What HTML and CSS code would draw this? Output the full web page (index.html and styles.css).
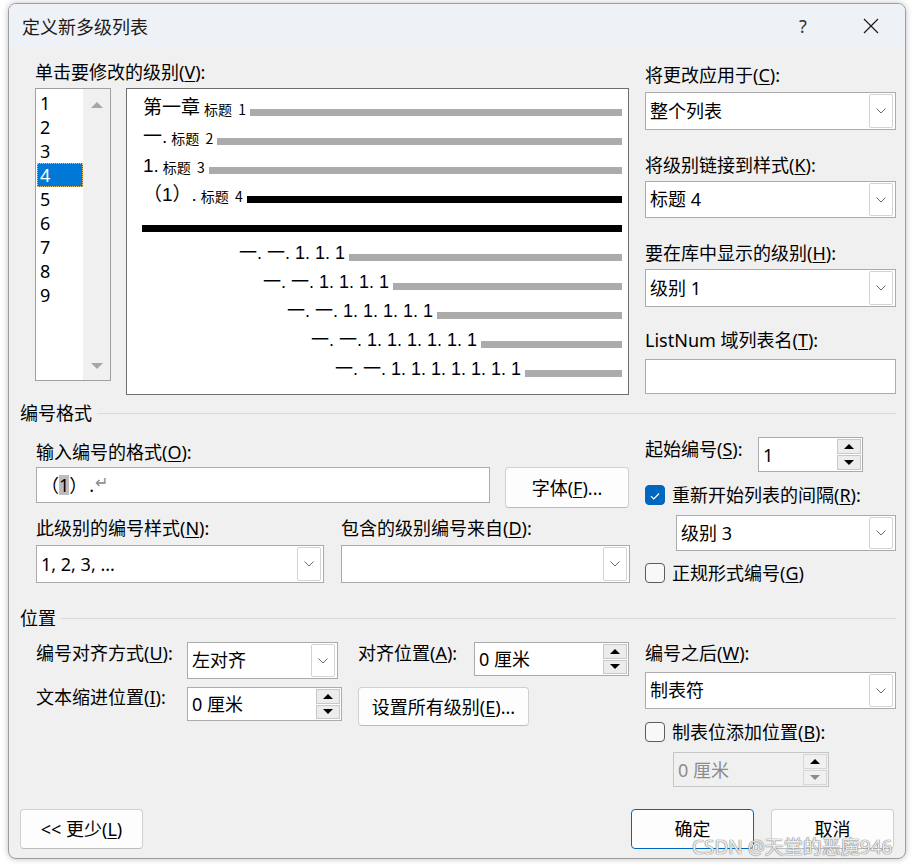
FILE: index.html
```html
<!DOCTYPE html>
<html lang="zh-CN">
<head>
<meta charset="utf-8">
<title>定义新多级列表</title>
<link rel="stylesheet" href="styles.css">
</head>
<body>
<div class="dialog">
  <div class="titlebar">
    <span class="title">定义新多级列表</span>
    <span class="help">?</span>
    <span class="close"><svg width="16" height="16" viewBox="0 0 16 16"><path d="M1 1 L15 15 M15 1 L1 15" stroke="#1a1a1a" stroke-width="1.2" fill="none"/></svg></span>
  </div>
  <div class="content">
    <div class="top">
      <div class="top-left">
        <div class="label">单击要修改的级别(<u>V</u>):</div>
        <div class="top-boxes">
          <div class="levels">
            <ul class="level-items">
              <li>1</li><li>2</li><li>3</li><li class="sel">4</li><li>5</li><li>6</li><li>7</li><li>8</li><li>9</li>
            </ul>
            <div class="vscroll"><span class="tri-up"></span><span class="tri-down"></span></div>
          </div>
          <div class="preview">
            <div class="prow"><span class="pn">第一章</span><span class="pt">标题 1</span><span class="pbar"></span></div>
            <div class="prow"><span class="pn">一.</span><span class="pt">标题 2</span><span class="pbar"></span></div>
            <div class="prow"><span class="pn">1.</span><span class="pt">标题 3</span><span class="pbar"></span></div>
            <div class="prow"><span class="pn">（1）.</span><span class="pt">标题 4</span><span class="pbar dark"></span></div>
            <div class="prow"><span class="pbar dark full"></span></div>
            <div class="prow"><span class="pd d1">一. 一. 1. 1. 1</span><span class="pbar"></span></div>
            <div class="prow"><span class="pd d2">一. 一. 1. 1. 1. 1</span><span class="pbar"></span></div>
            <div class="prow"><span class="pd d3">一. 一. 1. 1. 1. 1. 1</span><span class="pbar"></span></div>
            <div class="prow"><span class="pd d4">一. 一. 1. 1. 1. 1. 1. 1</span><span class="pbar"></span></div>
            <div class="prow"><span class="pd d5">一. 一. 1. 1. 1. 1. 1. 1. 1</span><span class="pbar"></span></div>
          </div>
        </div>
      </div>
      <div class="side top-right">
        <div class="label">将更改应用于(<u>C</u>):</div>
        <div class="combo tr1"><span class="val">整个列表</span><span class="drop"><svg width="10" height="6" viewBox="0 0 10 6"><path d="M0.5 0.5 L5 5 L9.5 0.5" fill="none" stroke="#6b6b6b"/></svg></span></div>
        <div class="label tl">将级别链接到样式(<u>K</u>):</div>
        <div class="combo tr2"><span class="val">标题 4</span><span class="drop"><svg width="10" height="6" viewBox="0 0 10 6"><path d="M0.5 0.5 L5 5 L9.5 0.5" fill="none" stroke="#6b6b6b"/></svg></span></div>
        <div class="label tl">要在库中显示的级别(<u>H</u>):</div>
        <div class="combo tr3"><span class="val">级别 1</span><span class="drop"><svg width="10" height="6" viewBox="0 0 10 6"><path d="M0.5 0.5 L5 5 L9.5 0.5" fill="none" stroke="#6b6b6b"/></svg></span></div>
        <div class="label tl4">ListNum 域列表名(<u>T</u>):</div>
        <div class="textbox listnum"></div>
      </div>
    </div>

    <div class="group g1"><span>编号格式</span></div>
    <div class="fmt">
      <div class="fmt-left">
        <div class="label">输入编号的格式(<u>O</u>):</div>
        <div class="row fmt-input-row">
          <div class="textbox fmtbox"><span>（</span><span class="hl">1</span><span>）</span><span class="dot">.</span><span class="ret">↵</span></div>
          <div class="btn fontbtn">字体(<u>F</u>)...</div>
        </div>
        <div class="fmt-grid">
          <div class="label">此级别的编号样式(<u>N</u>):</div>
          <div class="label">包含的级别编号来自(<u>D</u>):</div>
          <div class="combo fcombo"><span class="val">1, 2, 3, ...</span><span class="drop"><svg width="10" height="6" viewBox="0 0 10 6"><path d="M0.5 0.5 L5 5 L9.5 0.5" fill="none" stroke="#6b6b6b"/></svg></span></div>
          <div class="combo fcombo"><span class="val"></span><span class="drop"><svg width="10" height="6" viewBox="0 0 10 6"><path d="M0.5 0.5 L5 5 L9.5 0.5" fill="none" stroke="#6b6b6b"/></svg></span></div>
        </div>
      </div>
      <div class="side fmt-right">
        <div class="row">
          <div class="label startlbl">起始编号(<u>S</u>):</div>
          <div class="spin startspin"><span class="val">1</span><span class="btns"><span class="up"></span><span class="down"></span></span></div>
        </div>
        <div class="check-row cr1">
          <span class="check on"><svg width="20" height="20" viewBox="0 0 20 20"><path d="M5.5 10.2 L8.6 13.3 L14.6 7.2" fill="none" stroke="#fff" stroke-width="1.3"/></svg></span>
          <span class="label">重新开始列表的间隔(<u>R</u>):</span>
        </div>
        <div class="combo restart"><span class="val">级别 3</span><span class="drop"><svg width="10" height="6" viewBox="0 0 10 6"><path d="M0.5 0.5 L5 5 L9.5 0.5" fill="none" stroke="#6b6b6b"/></svg></span></div>
        <div class="check-row cr2">
          <span class="check"></span>
          <span class="label">正规形式编号(<u>G</u>)</span>
        </div>
      </div>
    </div>

    <div class="group g2"><span>位置</span></div>
    <div class="pos">
      <div class="pos-left">
        <div class="row">
          <div class="label plabel">编号对齐方式(<u>U</u>):</div>
          <div class="combo align"><span class="val">左对齐</span><span class="drop"><svg width="10" height="6" viewBox="0 0 10 6"><path d="M0.5 0.5 L5 5 L9.5 0.5" fill="none" stroke="#6b6b6b"/></svg></span></div>
          <div class="label plabel2">对齐位置(<u>A</u>):</div>
          <div class="spin alignpos"><span class="val">0 厘米</span><span class="btns"><span class="up"></span><span class="down"></span></span></div>
        </div>
        <div class="row prow2">
          <div class="label plabel">文本缩进位置(<u>I</u>):</div>
          <div class="spin indent"><span class="val">0 厘米</span><span class="btns"><span class="up"></span><span class="down"></span></span></div>
          <div class="btn allbtn">设置所有级别(<u>E</u>)...</div>
        </div>
      </div>
      <div class="side pos-right">
        <div class="label">编号之后(<u>W</u>):</div>
        <div class="combo after"><span class="val">制表符</span><span class="drop"><svg width="10" height="6" viewBox="0 0 10 6"><path d="M0.5 0.5 L5 5 L9.5 0.5" fill="none" stroke="#6b6b6b"/></svg></span></div>
        <div class="check-row cr3">
          <span class="check"></span>
          <span class="label">制表位添加位置(<u>B</u>):</span>
        </div>
        <div class="spin disabled tabpos"><span class="val">0 厘米</span><span class="btns"><span class="up"></span><span class="down"></span></span></div>
      </div>
    </div>

    <div class="footer">
      <div class="btn less">&lt;&lt; 更少(<u>L</u>)</div>
      <div class="spacer"></div>
      <div class="btn ok">确定</div>
      <div class="btn cancel">取消</div>
    </div>
  </div>
</div>
<div class="watermark">CSDN @天堂的恶魔946</div>
</body>
</html>
```

FILE: styles.css
```css
* { box-sizing: border-box; }
html, body { margin: 0; }
body {
  width: 913px;
  height: 865px;
  overflow: hidden;
  background: #ffffff;
  padding: 3px 0 0 8px;
  font-family: "Noto Sans", "Noto Sans CJK SC", sans-serif;
  font-size: 18px;
  color: #000;
  position: relative;
}
u { text-decoration: underline; text-underline-offset: 2px; }

.dialog {
  width: 898px;
  height: 856px;
  border: 1px solid #9d9d9d;
  border-radius: 8px;
  background: #f0f0f0;
  overflow: hidden;
  box-shadow: 0 0 6px rgba(0,0,0,0.25);
}

.titlebar {
  height: 43px;
  background: #eef2f6;
  display: flex;
  align-items: center;
  padding: 0 11px 0 13px;
}
.title { flex: 1; font-size: 18px; color: #1b1b1b; }
.help { width: 46px; margin-right: 22px; text-align: center; font-size: 18px; color: #333; }
.close { width: 46px; display: flex; justify-content: center; }

.content { padding: 13px 9px 0 11px; }

.label { height: 24px; line-height: 24px; white-space: nowrap; }

.row { display: flex; align-items: flex-start; }

/* top */
.top { display: flex; }
.top-left { margin-left: 15px; width: 594px; }
.top-boxes { display: flex; margin-top: 4px; }
.levels {
  width: 76px;
  height: 293px;
  border: 1px solid #a0a0a0;
  background: #fff;
  display: flex;
}
.level-items {
  list-style: none;
  margin: 0;
  padding: 2px 0 0 1px;
  width: 47px;
}
.level-items li {
  height: 24px;
  line-height: 24px;
  padding-left: 3px;
  font-size: 18px;
}
.level-items li.sel {
  background: #0078d7;
  color: #fff;
  outline: 1px dotted #e8c070;
  outline-offset: -1px;
}
.vscroll {
  width: 27px;
  background: #f0f0f0;
  display: flex;
  flex-direction: column;
  justify-content: space-between;
  align-items: center;
  padding: 13px 0 11px;
}
.tri-up { width: 0; height: 0; border-left: 6px solid transparent; border-right: 6px solid transparent; border-bottom: 6px solid #a6a6a6; }
.tri-down { width: 0; height: 0; border-left: 6px solid transparent; border-right: 6px solid transparent; border-top: 6px solid #a6a6a6; }

.preview {
  width: 504px;
  height: 307px;
  margin-left: 15px;
  border: 1px solid #6e6e6e;
  background: #fff;
  padding: 4px 6px 0 16px;
  font-family: "Liberation Sans", "Noto Sans CJK SC", sans-serif;
}
.prow { display: flex; align-items: center; height: 29px; }
.pn { font-size: 19px; line-height: 22px; white-space: pre; }
.pt { font-size: 14px; line-height: 18px; margin-left: 4px; white-space: pre; word-spacing: 3px; font-family: "Noto Sans CJK SC", sans-serif; position: relative; top: 1px; }
.pd { font-size: 18px; line-height: 22px; white-space: pre; }
.d1 { margin-left: 96px; }
.d2 { margin-left: 120px; }
.d3 { margin-left: 144px; }
.d4 { margin-left: 168px; }
.d5 { margin-left: 192px; }
.pbar {
  flex: 1;
  height: 7px;
  align-self: flex-start;
  margin-top: 16px;
  margin-left: 4px;
  background: #ababab;
}
.pbar.dark { background: #000; }
.pbar.full { margin-left: -1px; }

.side { width: 251px; margin-left: 16px; }
.top-right { padding-top: 3px; }

.combo {
  height: 38px;
  border: 1px solid #ababab;
  background: #fff;
  display: flex;
  align-items: center;
  padding: 0 2px 0 4px;
}
.combo .val { flex: 1; white-space: nowrap; overflow: hidden; line-height: 24px; margin-top: -1px; }
.combo .drop {
  width: 24px;
  align-self: stretch;
  margin: 1px 0;
  border: 1px solid #d3d3d3;
  border-radius: 2px;
  background: #fff;
  display: flex;
  align-items: center;
  justify-content: center;
}
.tr1 { margin-top: 5px; }
.tl { margin-top: 23px; }
.tr2 { margin-top: 4px; height: 37px; }
.tr3 { margin-top: 4px; }
.tl4 { margin-top: 21px; }

.textbox {
  border: 1px solid #ababab;
  background: #fff;
  display: flex;
  align-items: center;
  padding-left: 4px;
}
.listnum { margin-top: 7px; height: 35px; }

/* groups */
.group { display: flex; align-items: center; height: 24px; line-height: 24px; }
.group::after { content: ""; flex: 1; height: 1px; background: #d9d9d9; margin-left: 5px; }
.g1 { margin-top: 6px; }
.g2 { margin-top: 21px; }

/* number format */
.fmt { display: flex; align-items: flex-start; margin-top: 12px; }
.fmt-left { margin-left: 16px; width: 594px; padding-top: 3px; }
.fmt-right { margin-left: 15px; }
.fmt-input-row { margin-top: 3px; }
.fmtbox { width: 454px; height: 36px; line-height: 20px; }
.fmtbox .hl { background: #bdbdbd; }
.fmtbox .dot { margin-left: 2px; }
.fmtbox .ret { color: #8a8a8a; font-size: 16px; margin-left: 1px; position: relative; top: -3px; }

.btn {
  display: flex;
  align-items: center;
  justify-content: center;
  border: 1px solid #d0d0d0;
  border-bottom-color: #bcbcbc;
  border-radius: 4px;
  background: #fdfdfd;
  white-space: nowrap;
  line-height: 20px;
}
.fontbtn { width: 124px; height: 41px; margin-left: 15px; }

.fmt-grid {
  display: grid;
  grid-template-columns: 288px 289px;
  column-gap: 17px;
  margin-top: 8px;
}
.fcombo { margin-top: 5px; }

.startlbl { width: 113px; }
.spin {
  display: flex;
  border: 1px solid #ababab;
  background: #fff;
  padding: 1px 1px 1px 4px;
}
.spin .val { flex: 1; align-self: center; white-space: nowrap; line-height: 24px; }
.spin .btns { width: 24px; display: flex; flex-direction: column; gap: 1px; }
.spin .btns span {
  flex: 1;
  border: 1px solid #c8c8c8;
  background: #ececec;
  display: flex;
  align-items: center;
  justify-content: center;
}
.spin .up::before { content: ""; border-left: 5px solid transparent; border-right: 5px solid transparent; border-bottom: 5px solid #000; }
.spin .down::before { content: ""; border-left: 5px solid transparent; border-right: 5px solid transparent; border-top: 5px solid #000; }
.startspin { width: 105px; height: 35px; }

.check-row { display: flex; align-items: center; height: 24px; }
.check {
  width: 20px;
  height: 20px;
  border: 1px solid #5c5c5c;
  border-radius: 4px;
  background: #f8f8f8;
  margin-right: 7px;
  flex: none;
}
.check.on { background: #0067c0; border-color: #0067c0; display: flex; }
.cr1 { margin-top: 11px; }
.restart { margin-left: 31px; width: 220px; height: 36px; margin-top: 8px; }
.cr2 { margin-top: 10px; }

/* position */
.pos { display: flex; align-items: flex-start; margin-top: 11px; }
.pos-left { margin-left: 16px; width: 594px; }
.pos-right { margin-left: 15px; }
.plabel { width: 151px; }
.align { width: 151px; height: 37px; margin-top: 1px; }
.plabel2 { width: 116px; margin-left: 20px; }
.alignpos { width: 155px; height: 34px; margin-top: 1px; }
.prow2 { margin-top: 6px; }
.indent { width: 155px; height: 34px; margin-top: 2px; }
.allbtn { width: 171px; height: 39px; margin-top: 2px; margin-left: 16px; }
.after { margin-top: 7px; height: 37px; }
.cr3 { margin-top: 11px; }
.tabpos { margin-left: 28px; width: 156px; height: 35px; margin-top: 8px; }
.spin.disabled { background: #f0f0f0; border-color: #c6c6c6; color: #8c8c8c; }
.spin.disabled .btns span { background: #f0f0f0; border-color: #d6d6d6; }
.spin.disabled .down::before { border-top-color: #8a8a8a; }

/* footer */
.footer { display: flex; margin-top: 22px; padding-right: 2px; }
.footer .btn { width: 123px; height: 40px; }
.spacer { flex: 1; }
.btn.ok { border-color: #0067c0; }
.btn.cancel { margin-left: 17px; }

.watermark {
  position: absolute;
  left: 692px;
  top: 839px;
  font-size: 19px;
  line-height: 17px;
  white-space: nowrap;
  color: rgba(255,255,255,0.9);
  text-shadow: 0 0 1px #666, 0 0 1px #666;
}
```
